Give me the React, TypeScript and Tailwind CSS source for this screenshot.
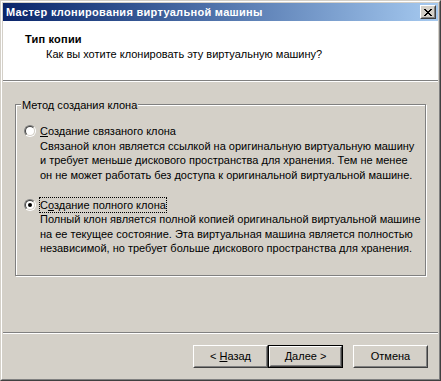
import React from "react";

function Bevel({ children, isDefault = false, className = "" }: { children: React.ReactNode; isDefault?: boolean; className?: string }) {
  const inner = (
    <div className="h-full w-full border border-t-white border-l-white border-b-[#404040] border-r-[#404040]">
      <div className="h-full w-full border border-t-[#d4d0c8] border-l-[#d4d0c8] border-b-[#808080] border-r-[#808080] flex items-center justify-center">
        {children}
      </div>
    </div>
  );
  if (isDefault) {
    return <div className={`w-[75px] h-[23px] border border-black ${className}`}>{inner}</div>;
  }
  return <div className={`w-[75px] h-[23px] ${className}`}>{inner}</div>;
}

function Radio({ checked }: { checked?: boolean }) {
  return (
    <div className="w-[12px] h-[12px] shrink-0 rounded-full border border-t-[#808080] border-l-[#808080] border-b-white border-r-white">
      <div className="w-full h-full rounded-full border border-t-[#404040] border-l-[#404040] border-b-[#d4d0c8] border-r-[#d4d0c8] bg-white flex items-center justify-center">
        {checked && <div className="w-[4px] h-[4px] rounded-full bg-black" />}
      </div>
    </div>
  );
}

export default function App() {
  return (
    <div className="w-[441px] h-[381px] bg-[#d4d0c8] font-['Liberation_Sans',Arial,sans-serif] text-[11px] text-black">
      <div className="h-full border border-t-[#d4d0c8] border-l-[#d4d0c8] border-b-[#404040] border-r-[#404040]">
        <div className="h-full border border-t-white border-l-white border-b-[#808080] border-r-[#808080] p-px flex flex-col">
          {/* Title bar */}
          <div className="h-[18px] shrink-0 flex items-center justify-between bg-gradient-to-r from-[#0a246a] to-[#a6caf0] pl-[3px] pr-[2px]">
            <span className="font-bold text-white leading-[13px] text-[11px] tracking-[0.3px]">Мастер клонирования виртуальной машины</span>
            <div className="w-[16px] h-[14px] border border-t-white border-l-white border-b-[#404040] border-r-[#404040] bg-[#d4d0c8]">
              <div className="w-full h-full border border-t-[#d4d0c8] border-l-[#d4d0c8] border-b-[#808080] border-r-[#808080] flex items-center justify-center">
                <svg width="8" height="7" viewBox="0 0 8 7" shapeRendering="crispEdges">
                  <path d="M0 0h2v1h-2zM6 0h2v1h-2zM1 1h2v1h-2zM5 1h2v1h-2zM2 2h4v1h-4zM3 3h2v1h-2zM2 4h4v1h-4zM1 5h2v1h-2zM5 5h2v1h-2zM0 6h2v1h-2zM6 6h2v1h-2z" fill="#000" />
                </svg>
              </div>
            </div>
          </div>

          {/* Header */}
          <div className="h-[59px] shrink-0 bg-white pt-[11px] pl-[22px]">
            <div className="font-bold leading-[14px] tracking-[0.2px]">Тип копии</div>
            <div className="leading-[14px] pl-[21px] pt-px">Как вы хотите клонировать эту виртуальную машину?</div>
          </div>
          <div className="h-px shrink-0 bg-[#808080]" />
          <div className="h-px shrink-0 bg-white" />

          {/* Body */}
          <div className="flex-1 px-[12px] pt-[22px]">
            <div className="relative h-[172px] border border-[#808080] shadow-[inset_1px_1px_0_#fff,1px_1px_0_#fff] pl-[8px] pt-[19px]">
              <div className="absolute top-[-6px] left-[5px] bg-[#d4d0c8] px-px leading-[13px]">Метод создания клона</div>

              <div className="flex items-start gap-[4px] leading-[14.5px]">
                <div className="pt-[1px]"><Radio /></div>
                <div>
                  <div><span className="underline">С</span>оздание связаного клона</div>
                  <div>Связаной клон является ссылкой на оригинальную виртуальную машину</div>
                  <div>и требует меньше дискового пространства для хранения. Тем не менее</div>
                  <div>он не может работать без доступа к оригинальной виртуальной машине.</div>
                </div>
              </div>

              <div className="flex items-start gap-[3px] leading-[14.5px] mt-[16px]">
                <div className="pt-[1px]"><Radio checked /></div>
                <div>
                  <div className="-mt-px">
                    <span className="inline-block border border-dotted border-black leading-[14px]">С<span className="underline">о</span>здание полного клона</span>
                  </div>
                  <div className="pl-px -mt-px">Полный клон является полной копией оригинальной виртуальной машине</div>
                  <div className="pl-px">на ее текущее состояние. Эта виртуальная машина является полностью</div>
                  <div className="pl-px">независимой, но требует больше дискового пространства для хранения.</div>
                </div>
              </div>
            </div>
          </div>

          <div className="h-px shrink-0 bg-[#808080]" />
          <div className="h-px shrink-0 bg-white" />

          {/* Buttons */}
          <div className="h-[44px] shrink-0 flex items-start justify-end pt-[11px] pr-[10px]">
            <Bevel><span>&lt; <span className="underline">Н</span>азад</span></Bevel>
            <Bevel isDefault><span><span className="underline">Д</span>алее &gt;</span></Bevel>
            <Bevel className="ml-[10px]"><span>Отмена</span></Bevel>
          </div>
        </div>
      </div>
    </div>
  );
}
